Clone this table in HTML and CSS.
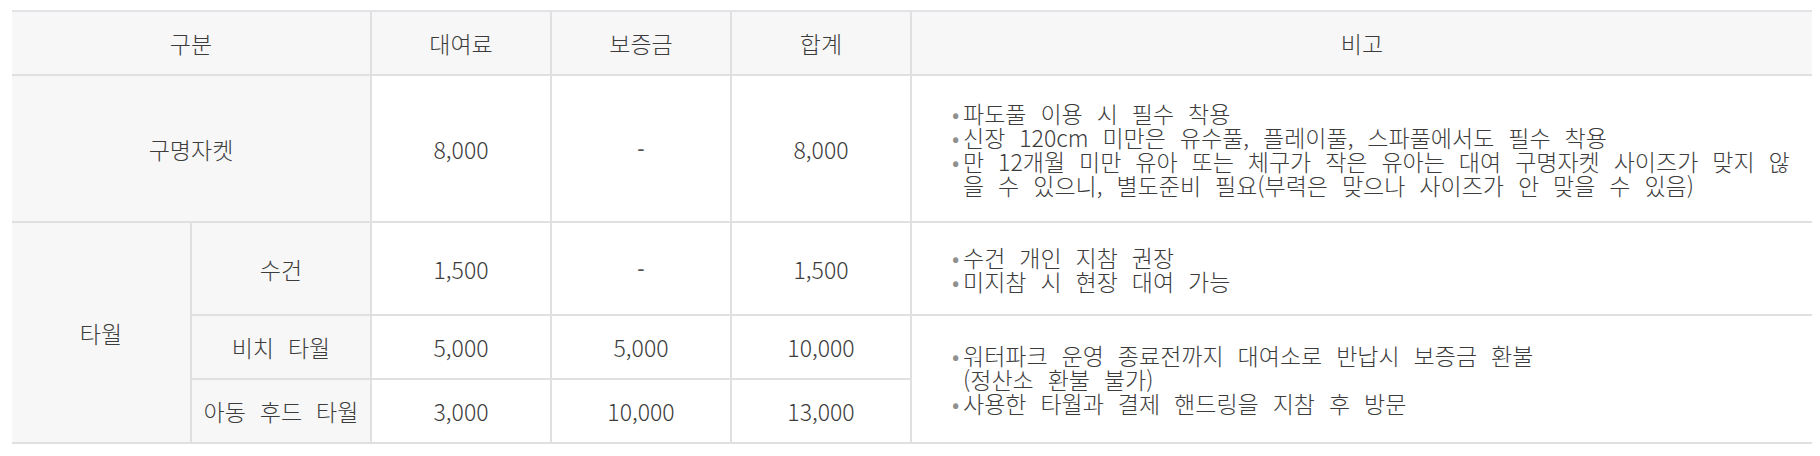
FILE: index.html
```html
<!DOCTYPE html>
<html lang="ko">
<head>
<meta charset="utf-8">
<link rel="stylesheet" href="styles.css">
</head>
<body>
<table class="rental">
  <colgroup>
    <col class="c-narrow"><col class="c-narrow"><col class="c-narrow"><col class="c-narrow"><col class="c-narrow"><col class="c-wide">
  </colgroup>
  <thead>
    <tr class="r-head">
      <th colspan="2">구분</th>
      <th>대여료</th>
      <th>보증금</th>
      <th>합계</th>
      <th class="last">비고</th>
    </tr>
  </thead>
  <tbody>
    <tr class="r-1">
      <th colspan="2" class="label">구명자켓</th>
      <td>8,000</td>
      <td class="dash">-</td>
      <td>8,000</td>
      <td class="note last">
        <ul class="bullets">
          <li>파도풀 이용 시 필수 착용</li>
          <li>신장 120cm 미만은 유수풀, 플레이풀, 스파풀에서도 필수 착용</li>
          <li>만 12개월 미만 유아 또는 체구가 작은 유아는 대여 구명자켓 사이즈가 맞지 않<br>을 수 있으니, 별도준비 필요(부력은 맞으나 사이즈가 안 맞을 수 있음)</li>
        </ul>
      </td>
    </tr>
    <tr class="r-2">
      <th rowspan="3" class="label">타월</th>
      <th class="label">수건</th>
      <td>1,500</td>
      <td class="dash">-</td>
      <td>1,500</td>
      <td class="note last">
        <ul class="bullets">
          <li>수건 개인 지참 권장</li>
          <li>미지참 시 현장 대여 가능</li>
        </ul>
      </td>
    </tr>
    <tr class="r-3">
      <th class="label">비치 타월</th>
      <td>5,000</td>
      <td>5,000</td>
      <td>10,000</td>
      <td rowspan="2" class="note last">
        <ul class="bullets">
          <li>워터파크 운영 종료전까지 대여소로 반납시 보증금 환불<br>(정산소 환불 불가)</li>
          <li>사용한 타월과 결제 핸드링을 지참 후 방문</li>
        </ul>
      </td>
    </tr>
    <tr class="r-4">
      <th class="label">아동 후드 타월</th>
      <td>3,000</td>
      <td>10,000</td>
      <td>13,000</td>
    </tr>
  </tbody>
</table>
</body>
</html>
```

FILE: styles.css
```css
html, body {
  background: #ffffff;
}
body {
  margin: 10px 8px 0 12px;
  font-family: "Noto Sans CJK KR", "Noto Sans", sans-serif;
  font-size: 23px;
  font-weight: 300;
  line-height: 24px;
  word-spacing: 7.5px;
  color: #3c3c3c;
}
.rental {
  width: 1800px;
  border-collapse: separate;
  border-spacing: 0;
  table-layout: fixed;
  border-top: 2px solid #e1e3e6;
}
.c-narrow { width: 180px; }
.c-wide { width: 900px; }

.rental th,
.rental td {
  padding: 0;
  font-weight: 300;
  text-align: center;
  vertical-align: middle;
  border-right: 2px solid #e0e0e0;
  border-bottom: 2px solid #e0e0e0;
  background: #ffffff;
  white-space: nowrap;
}
.rental th.last,
.rental td.last {
  border-right: none;
}
.rental thead th {
  background: #f7f7f7;
}
.rental th.label {
  background: #f7f7f7;
}
.rental td.dash {
  font-family: "Liberation Sans", sans-serif;
  font-size: 22px;
  color: #555555;
}
.r-head { height: 64px; }
.r-1 { height: 147px; }
.r-2 { height: 93px; }
.r-3 { height: 64px; }
.r-4 { height: 64px; }

.rental td.note {
  text-align: left;
  padding: 0 0 0 40px;
}
.bullets {
  list-style: none;
  margin: 0;
  padding: 0;
}
.bullets li {
  padding-left: 11px;
  text-indent: -11px;
}
.bullets li::before {
  content: "\2022";
  display: inline-block;
  width: 11px;
  text-indent: 0;
  color: #8f8f8f;
  word-spacing: 0;
}
```
